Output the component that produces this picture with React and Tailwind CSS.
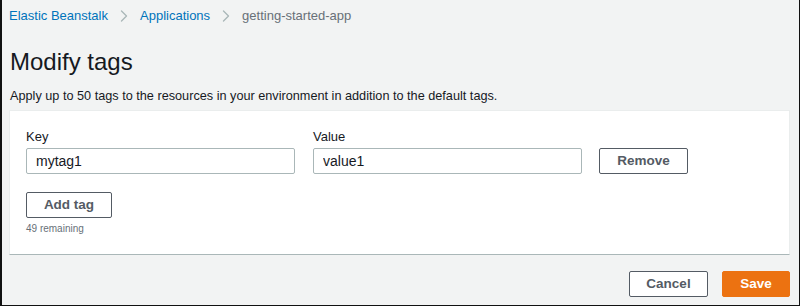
import { ChevronRight } from "lucide-react";

function Crumbs() {
  return (
    <nav className="flex h-4 items-center text-[13px] leading-4">
      <a className="text-[#0073bb]">Elastic Beanstalk</a>
      <ChevronRight size={20} strokeWidth={1.6} className="mx-[6px] text-[#aab7b8]" />
      <a className="text-[#0073bb]">Applications</a>
      <ChevronRight size={20} strokeWidth={1.6} className="mx-[6px] text-[#aab7b8]" />
      <span className="text-[#687078]">getting-started-app</span>
    </nav>
  );
}

function Field({ label, value }) {
  return (
    <div className="flex w-[269px] flex-col">
      <label className="h-4 text-[13px] leading-4 text-[#16191f]">{label}</label>
      <input
        readOnly
        value={value}
        className="mt-[3px] h-[26px] w-full rounded-[2px] border border-[#aab7b8] bg-white px-[9px] text-[14px] text-[#16191f] outline-none"
      />
    </div>
  );
}

function Btn({ children, className = "" }) {
  return (
    <button
      type="button"
      className={
        "flex h-[26px] items-center justify-center rounded-[2px] border border-[#545b64] bg-white text-[13.5px] font-bold text-[#545b64] " +
        className
      }
    >
      {children}
    </button>
  );
}

export default function App() {
  return (
    <div
      className="flex h-[306px] w-[800px] flex-col border-b border-l-2 border-r border-[#111] bg-[#f2f3f3] pl-[7px] pr-[9px] pt-2"
      style={{ fontFamily: '"Liberation Sans", Arial, sans-serif' }}
    >
      <Crumbs />
      <h1 className="mt-6 h-7 pl-px text-[24px] leading-7 text-[#16191f]">Modify tags</h1>
      <p className="mt-3 h-4 pl-px text-[12.7px] leading-4 text-[#16191f]">
        Apply up to 50 tags to the resources in your environment in addition to the default tags.
      </p>

      <section className="mt-[6px] border border-b-[#aab7b8] border-l-[#eaeded] border-r-[#eaeded] border-t-[#eaeded] bg-white pb-[19px] pl-[16px] pt-[18px]">
        <div className="flex items-end gap-[18px]">
          <Field label="Key" value="mytag1" />
          <Field label="Value" value="value1" />
          <Btn className="ml-[-1px] w-[89px]">Remove</Btn>
        </div>
        <Btn className="mt-[18px] w-[86px]">Add tag</Btn>
        <p className="mt-[5px] text-[10px] leading-3 text-[#687078]">49 remaining</p>
      </section>

      <div className="mt-4 flex justify-end gap-[14px]">
        <Btn className="w-[79px]">Cancel</Btn>
        <button
          type="button"
          className="flex h-[26px] w-[68px] items-center justify-center rounded-[2px] border border-[#ec7211] bg-[#ec7211] text-[13.5px] font-bold text-white"
        >
          Save
        </button>
      </div>
    </div>
  );
}
